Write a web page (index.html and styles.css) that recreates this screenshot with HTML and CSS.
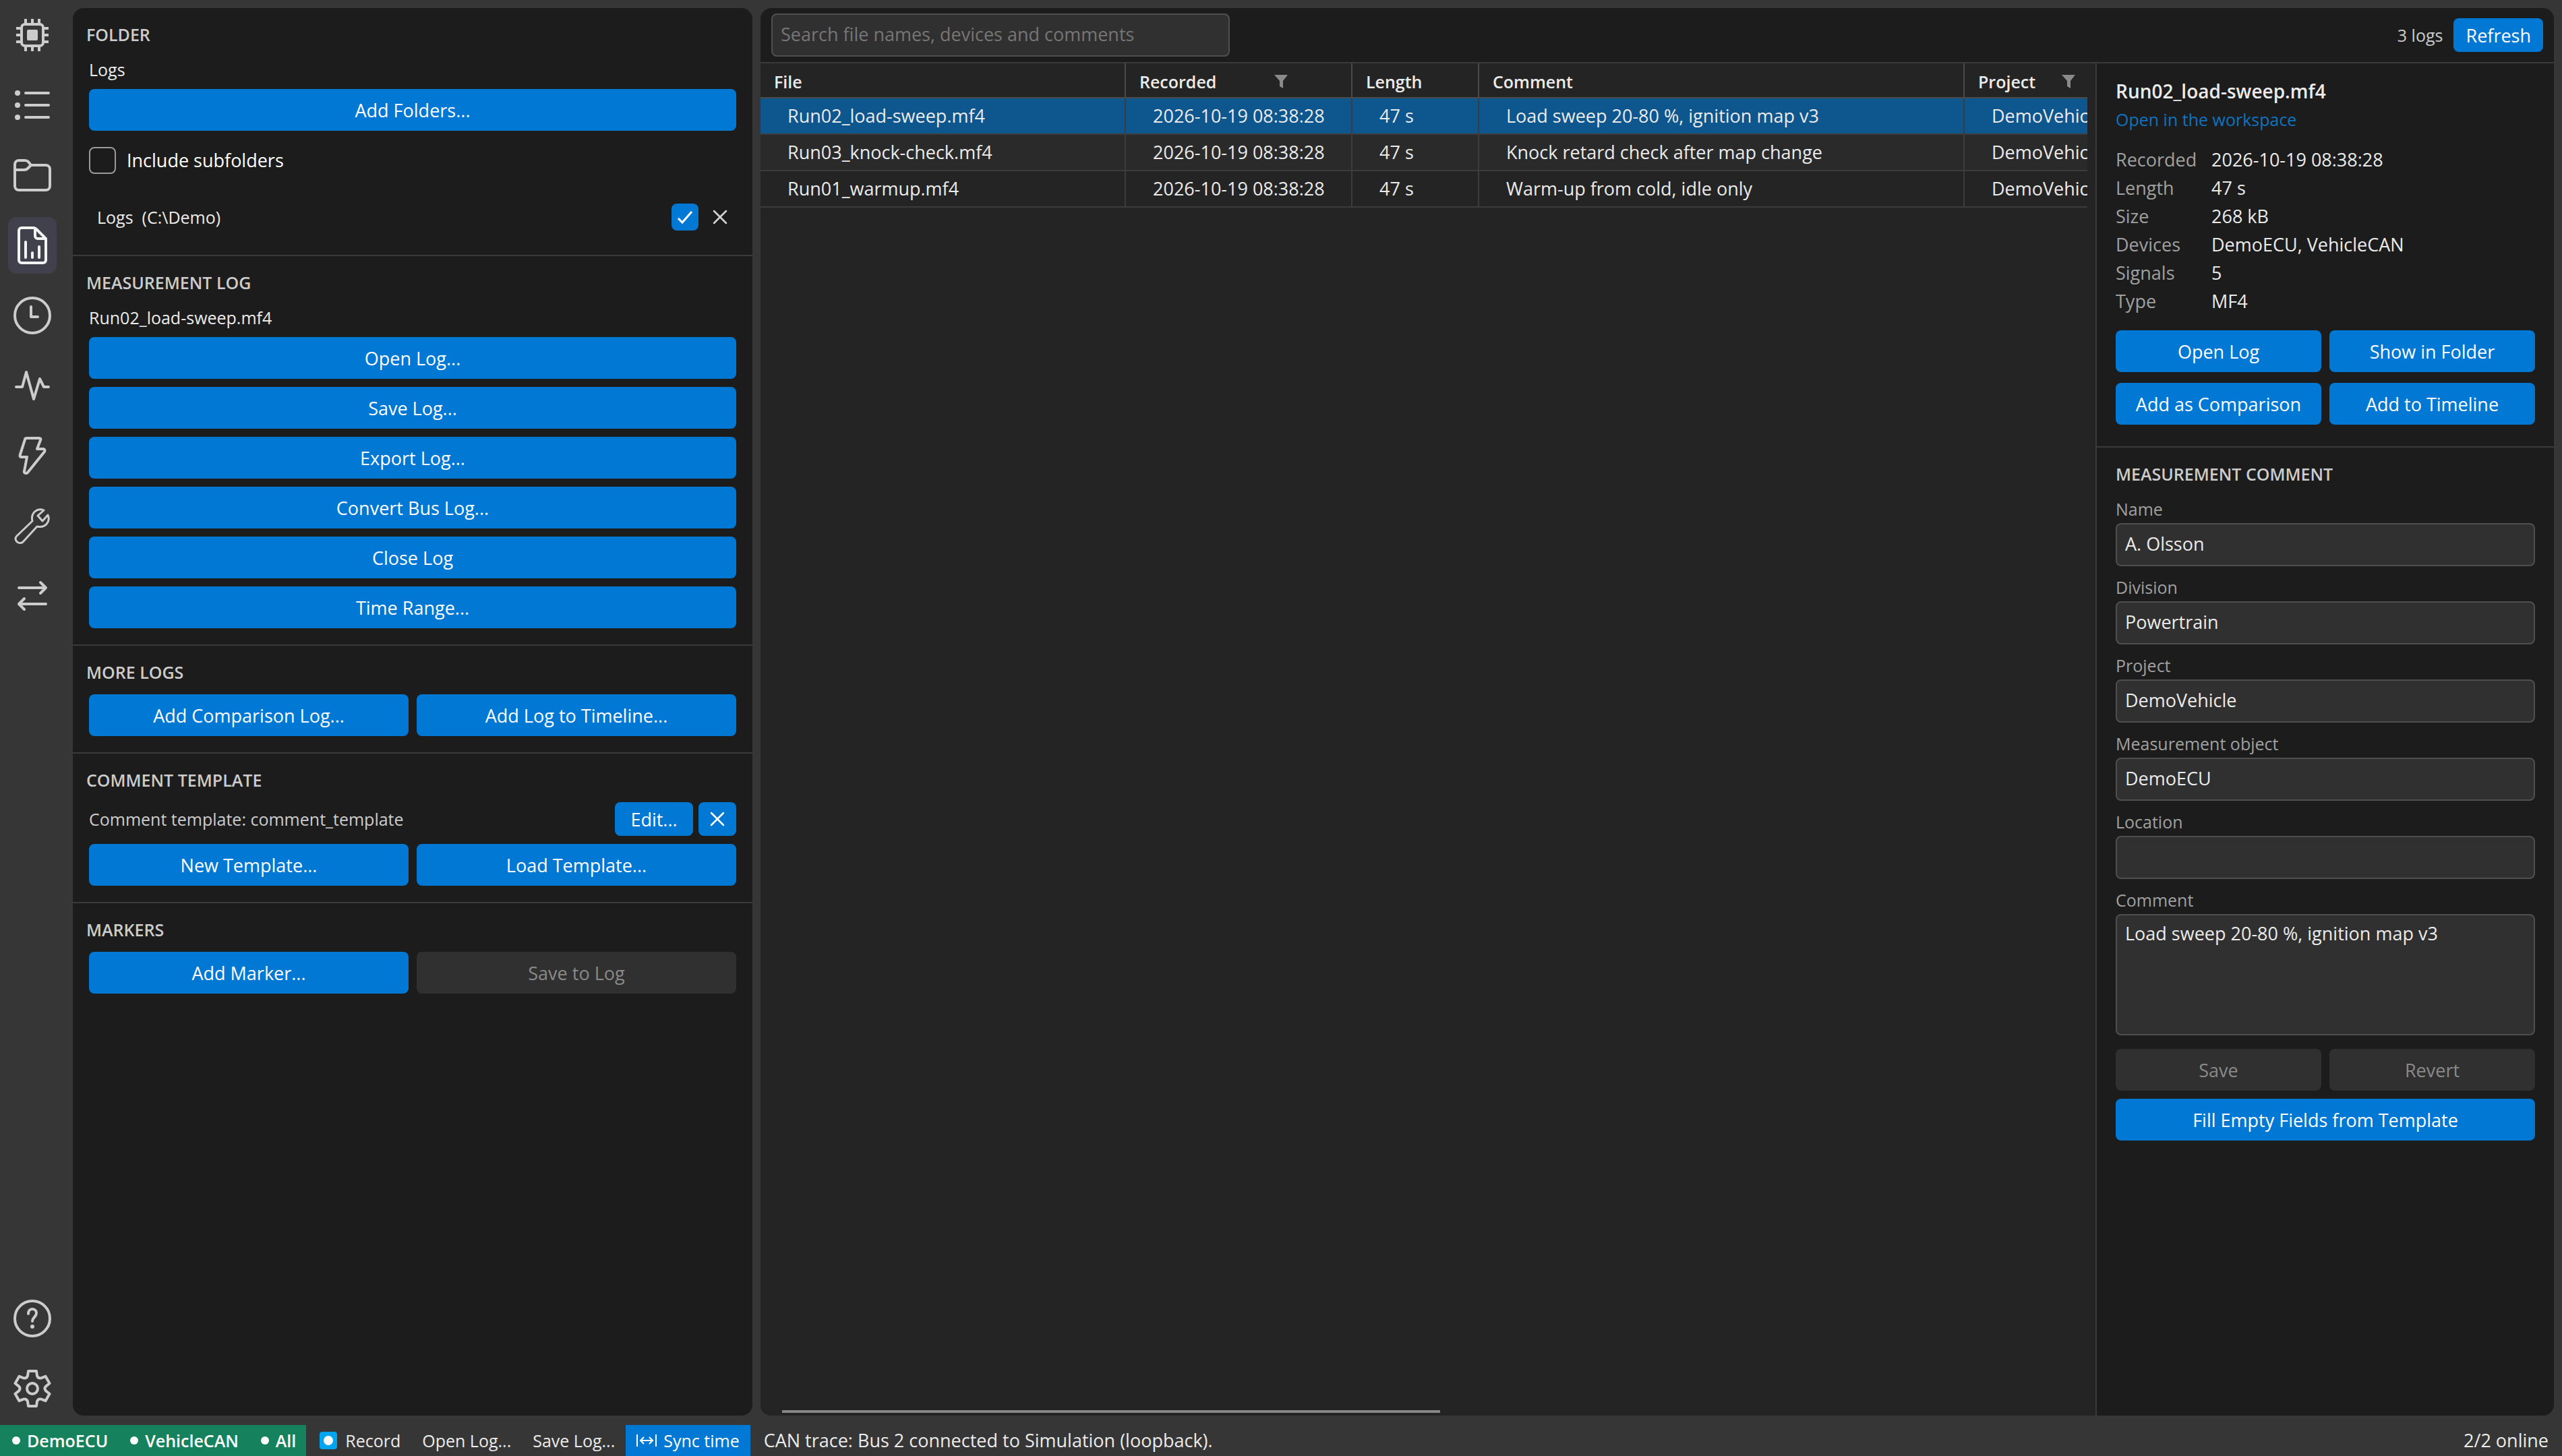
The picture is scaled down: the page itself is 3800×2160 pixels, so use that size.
FILE: index.html
```html
<!DOCTYPE html>
<html lang="en">
<head>
<meta charset="utf-8">
<title>Measurement logs</title>
<link rel="stylesheet" href="styles.css">
</head>
<body>
<div class="app">
  <nav class="rail" aria-label="Views">
    <button class="rail-btn" aria-label="Devices"><svg class="icon" viewBox="0 0 56 56"><rect x="12" y="12" width="32" height="32" rx="5"/><path d="M18 4v8M28 4v8M38 4v8M18 44v8M28 44v8M38 44v8M4 18h8M4 28h8M4 38h8M44 18h8M44 28h8M44 38h8" stroke-linecap="butt"/><rect class="solid" x="20" y="20" width="16" height="16" rx="2"/></svg></button>
    <button class="rail-btn" aria-label="Signals"><svg class="icon" viewBox="0 0 56 56"><path d="M18 10h34M18 28h34M18 46h34"/><circle class="solid" cx="6" cy="10" r="4"/><circle class="solid" cx="6" cy="28" r="4"/><circle class="solid" cx="6" cy="46" r="4"/></svg></button>
    <button class="rail-btn" aria-label="Files"><svg class="icon" viewBox="0 0 56 56"><path d="M2 12a6 6 0 0 1 6-6h9c2 0 4 1 5 2l4 5h22a6 6 0 0 1 6 6v25a6 6 0 0 1-6 6H8a6 6 0 0 1-6-6z"/><path d="M2 20h14c2 0 4-1 5-2l5-5"/></svg></button>
    <button class="rail-btn rail-btn-active" aria-label="Measurement logs" aria-current="page"><svg class="icon" viewBox="0 0 56 56"><path d="M12 2h18c1 0 3 1 4 2l12 12c1 1 2 2 2 4v30a4 4 0 0 1-4 4H12a4 4 0 0 1-4-4V6a4 4 0 0 1 4-4z"/><path d="M32 3v11a4 4 0 0 0 4 4h12M18 23v23M28 39v7M38 30v16"/></svg></button>
    <button class="rail-btn" aria-label="History"><svg class="icon" viewBox="0 0 56 56"><circle cx="28" cy="28" r="26"/><path d="M26 15v15h10"/></svg></button>
    <button class="rail-btn" aria-label="Live view"><svg class="icon" viewBox="0 0 56 56"><path d="M4 30h9L19 8l11 40 9-30 6 12h7"/></svg></button>
    <button class="rail-btn" aria-label="Triggers"><svg class="icon" viewBox="0 0 56 56"><path d="M20 2h18c2 0 3 1 2 3l-5 13h9c2 0 3 2 2 4L21 53c-2 2-6 1-5-2l4-21h-8c-2 0-3-1-2-4l7-22c0-1 1-2 3-2z"/></svg></button>
    <button class="rail-btn" aria-label="Tools"><svg class="icon icon-thin" viewBox="0 0 56 56"><path d="M45 5c-9-4-20 3-17 16L5 43c-6 6 3 14 9 9l21-23c13 3 20-8 16-17l-8 9-7-8z"/></svg></button>
    <button class="rail-btn" aria-label="Transfer"><svg class="icon" viewBox="0 0 56 56"><path d="M8 16h40M40 8l8 8-8 8M48 40H8M16 32l-8 8 8 8"/></svg></button>
    <span class="rail-space"></span>
    <button class="rail-btn" aria-label="Help"><svg class="icon" viewBox="0 0 56 56"><circle cx="28" cy="28" r="26"/><path d="M22 21c0-4 2-7 6-7s6 3 6 6c0 6-6 6-6 12"/><circle class="solid" cx="28" cy="40" r="3"/></svg></button>
    <button class="rail-btn" aria-label="Settings"><svg class="icon" viewBox="0 0 56 56"><path d="M34 2L35 9Q36.500 13.300 41 12.400L47.500 9.800L53.500 20.200L48 24.600Q45 28 48 31.400L53.500 35.800L47.500 46.200L41 43.600Q36.500 42.700 35 47L34 54H22L21 47Q19.500 42.700 15 43.600L8.500 46.200L2.500 35.800L8 31.400Q11 28 8 24.600L2.500 20.200L8.500 9.800L15 12.400Q19.500 13.300 21 9L22 2Z"/><circle cx="28" cy="28" r="8"/></svg></button>
  </nav>

  <aside class="side">
    <section class="group group-folder">
      <h2 class="heading">FOLDER</h2>
      <p class="caption">Logs</p>
      <button class="btn">Add Folders...</button>
      <label class="check-row"><span class="check"><input type="checkbox" class="check-box"></span>Include subfolders</label>
      <div class="folder-row">
        <label class="folder-name" for="folder-on">Logs&nbsp; (C:\Demo)</label>
        <span class="check"><input type="checkbox" class="check-box" id="folder-on" checked><svg class="check-mark" viewBox="0 0 40 40"><path d="M10 22l6 6 14-16"/></svg></span>
        <button class="bare" aria-label="Remove folder"><svg class="cross" viewBox="0 0 24 24"><path d="M3 3l18 18M21 3L3 21"/></svg></button>
      </div>
    </section>
    <section class="group">
      <h2 class="heading">MEASUREMENT LOG</h2>
      <p class="caption">Run02_load-sweep.mf4</p>
      <div class="stack">
        <button class="btn">Open Log...</button>
        <button class="btn">Save Log...</button>
        <button class="btn">Export Log...</button>
        <button class="btn">Convert Bus Log...</button>
        <button class="btn">Close Log</button>
        <button class="btn">Time Range...</button>
      </div>
    </section>
    <section class="group">
      <h2 class="heading">MORE LOGS</h2>
      <div class="pair"><button class="btn">Add Comparison Log...</button><button class="btn">Add Log to Timeline...</button></div>
    </section>
    <section class="group">
      <h2 class="heading">COMMENT TEMPLATE</h2>
      <div class="template-row">
        <span class="template-name">Comment template: comment_template</span>
        <button class="btn btn-small">Edit...</button>
        <button class="btn btn-small btn-square" aria-label="Clear template"><svg class="cross" viewBox="0 0 24 24"><path d="M3 3l18 18M21 3L3 21"/></svg></button>
      </div>
      <div class="pair"><button class="btn">New Template...</button><button class="btn">Load Template...</button></div>
    </section>
    <section class="group">
      <h2 class="heading">MARKERS</h2>
      <div class="pair"><button class="btn">Add Marker...</button><button class="btn" disabled>Save to Log</button></div>
    </section>
  </aside>

  <main class="main">
    <header class="toolbar">
      <input class="field search" type="search" placeholder="Search file names, devices and comments" aria-label="Search logs">
      <span class="count">3 logs</span>
      <button class="btn btn-small">Refresh</button>
    </header>
    <div class="content">
      <div class="list">
        <div class="table-clip">
          <table class="logs">
            <colgroup><col class="col-file"><col class="col-recorded"><col class="col-length"><col class="col-comment"><col class="col-project"></colgroup>
            <thead>
              <tr>
                <th>File</th>
                <th><span class="th-in">Recorded<svg class="funnel" viewBox="0 0 20 20"><path d="M0 0h20l-7 9v11l-5-3V9z"/></svg></span></th>
                <th>Length</th>
                <th>Comment</th>
                <th><span class="th-in">Project<svg class="funnel" viewBox="0 0 20 20"><path d="M0 0h20l-7 9v11l-5-3V9z"/></svg></span></th>
              </tr>
            </thead>
            <tbody>
              <tr class="selected"><td>Run02_load-sweep.mf4</td><td>2026-10-19 08:38:28</td><td>47 s</td><td>Load sweep 20-80 %, ignition map v3</td><td>DemoVehicle</td></tr>
              <tr class="odd"><td>Run03_knock-check.mf4</td><td>2026-10-19 08:38:28</td><td>47 s</td><td>Knock retard check after map change</td><td>DemoVehicle</td></tr>
              <tr><td>Run01_warmup.mf4</td><td>2026-10-19 08:38:28</td><td>47 s</td><td>Warm-up from cold, idle only</td><td>DemoVehicle</td></tr>
            </tbody>
          </table>
        </div>
        <div class="scroll-track"><div class="scroll-thumb"></div></div>
      </div>
      <aside class="detail">
        <section class="info">
          <h1 class="title">Run02_load-sweep.mf4</h1>
          <a class="link" href="#workspace">Open in the workspace</a>
          <dl class="facts">
            <dt>Recorded</dt><dd>2026-10-19 08:38:28</dd>
            <dt>Length</dt><dd>47 s</dd>
            <dt>Size</dt><dd>268 kB</dd>
            <dt>Devices</dt><dd>DemoECU, VehicleCAN</dd>
            <dt>Signals</dt><dd>5</dd>
            <dt>Type</dt><dd>MF4</dd>
          </dl>
          <div class="pair pair-loose">
            <button class="btn">Open Log</button><button class="btn">Show in Folder</button>
            <button class="btn">Add as Comparison</button><button class="btn">Add to Timeline</button>
          </div>
        </section>
        <form class="comment">
          <h2 class="heading heading-flush">MEASUREMENT COMMENT</h2>
          <label class="label" for="f-name">Name</label><input class="field" id="f-name" value="A. Olsson">
          <label class="label" for="f-division">Division</label><input class="field" id="f-division" value="Powertrain">
          <label class="label" for="f-project">Project</label><input class="field" id="f-project" value="DemoVehicle">
          <label class="label" for="f-object">Measurement object</label><input class="field" id="f-object" value="DemoECU">
          <label class="label" for="f-location">Location</label><input class="field" id="f-location">
          <label class="label" for="f-comment">Comment</label><textarea class="field area" id="f-comment">Load sweep 20-80 %, ignition map v3</textarea>
          <div class="pair form-actions">
            <button type="button" class="btn" disabled>Save</button><button type="button" class="btn" disabled>Revert</button>
            <button type="button" class="btn btn-wide">Fill Empty Fields from Template</button>
          </div>
        </form>
      </aside>
    </div>
  </main>
</div>

<footer class="status">
  <div class="online">
    <button class="online-item"><span class="dot"></span>DemoECU</button>
    <button class="online-item"><span class="dot"></span>VehicleCAN</button>
    <button class="online-item"><span class="dot"></span>All</button>
  </div>
  <button class="status-btn status-record"><svg class="record" viewBox="0 0 26 26"><rect width="26" height="26" rx="4"/><circle cx="13" cy="13" r="7"/></svg>Record</button>
  <button class="status-btn">Open Log...</button>
  <button class="status-btn">Save Log...</button>
  <button class="status-btn status-sync"><svg class="sync" viewBox="0 0 30 20"><path d="M1 1v18M29 1v18M6 10h18M11 5l-5 5 5 5M19 5l5 5-5 5"/></svg>Sync time</button>
  <span class="message">CAN trace: Bus 2 connected to Simulation (loopback).</span>
  <span class="summary">2/2 online</span>
</footer>
</body>
</html>
```
FILE: styles.css
```css
* { box-sizing: border-box; }

body {
  margin: 0;
  min-height: 100vh;
  display: flex;
  flex-direction: column;
  background: #363636;
  color: #ebebeb;
  font: 27px/38px "Open Sans", "Noto Sans", sans-serif;
}

h1, h2, p, dl, dd { margin: 0; }
button, input, textarea { font: inherit; color: inherit; }
button { border: 0; padding: 0; background: none; }

.app {
  flex: 1;
  display: flex;
  gap: 12px;
  padding: 0 12px 14px 0;
}

/* navigation rail */
.rail {
  flex: none;
  width: 96px;
  padding: 10px 12px 0;
  display: flex;
  flex-direction: column;
  gap: 20px;
  margin-bottom: -2px;
}
.rail-btn {
  flex: none;
  height: 84px;
  display: grid;
  place-items: center;
  border-radius: 12px;
  color: #cccccc;
}
.rail-btn-active { background: #41414d; color: #f2f2f2; }
.rail-space { flex: 1; }
.icon {
  width: 56px;
  height: 56px;
  fill: none;
  stroke: currentColor;
  stroke-width: 4;
  stroke-linecap: round;
  stroke-linejoin: round;
}
.icon-thin { stroke-width: 3; }
.icon .solid { fill: currentColor; stroke: none; }

/* panels */
.side, .main {
  margin-top: 12px;
  border-radius: 16px;
  background: #1c1c1c;
  overflow: hidden;
}
.side { flex: none; width: 1008px; }
.main { flex: 1; min-width: 0; display: flex; flex-direction: column; }

.group { padding: 20px 24px 24px; }
.group + .group { border-top: 2px solid #3a3a3a; }
.group-folder { padding-bottom: 36px; }
.heading {
  margin: 0 -4px 14px;
  font-size: 25px;
  line-height: 38px;
  font-weight: 600;
  color: #cccccc;
}
.heading-flush { margin: 0 0 14px; }
.caption { margin-bottom: 10px; font-size: 25px; }

.btn {
  width: 100%;
  height: 62px;
  padding-top: 2px;
  border-radius: 8px;
  background: #0078d4;
  color: #ffffff;
}
.btn:disabled { background: #303030; color: #8a8a8a; }
.btn-small { flex: none; width: auto; min-width: 116px; height: 50px; padding: 2px 18px 0; }
.btn-square { min-width: 56px; padding: 0; display: grid; place-items: center; }
.btn-wide { grid-column: 1 / -1; }
.stack { display: grid; gap: 12px; }
.pair { display: grid; grid-template-columns: 1fr 1fr; gap: 12px; }
.pair-loose { row-gap: 16px; }

.check-row { display: flex; align-items: center; gap: 16px; margin-top: 24px; color: #ffffff; }
.check { display: grid; width: 40px; height: 40px; }
.check-box {
  grid-area: 1 / 1;
  appearance: none;
  width: 40px;
  height: 40px;
  margin: 0;
  border: 2px solid #9a9a9a;
  border-radius: 8px;
}
.check-box:checked { background: #0078d4; border-color: #0078d4; }
.check-mark { grid-area: 1 / 1; fill: none; stroke: #ffffff; stroke-width: 3; pointer-events: none; }
.folder-row { display: flex; align-items: center; gap: 20px; margin-top: 44px; padding: 0 12px; }
.folder-name { flex: 1; font-size: 25px; }
.bare { display: grid; color: #d6d6d6; }
.cross { width: 24px; height: 24px; fill: none; stroke: currentColor; stroke-width: 2.5; stroke-linecap: round; }

.template-row { display: flex; align-items: center; gap: 8px; margin-bottom: 12px; }
.template-name { flex: 1; font-size: 25px; color: #cccccc; }

/* toolbar */
.toolbar {
  display: flex;
  align-items: center;
  gap: 16px;
  padding: 8px 16px;
  border-bottom: 2px solid #3a3a3a;
}
.field {
  display: block;
  width: 100%;
  height: 64px;
  padding: 0 12px 4px;
  border: 2px solid #4f4f4f;
  border-radius: 8px;
  background: #303030;
  outline: 0;
}
.search { width: 680px; margin-right: auto; }
.search::placeholder { color: #767676; opacity: 1; }
.count { font-size: 25px; color: #cccccc; }

.content { flex: 1; display: flex; }

/* log list */
.list {
  flex: 1;
  min-width: 0;
  display: flex;
  flex-direction: column;
  justify-content: space-between;
  padding: 0 12px 4px 0;
  background: #242424;
}
.table-clip { overflow: hidden; }
.logs { width: 2046px; table-layout: fixed; border-collapse: separate; border-spacing: 0; }
.col-file { width: 542px; }
.col-recorded { width: 336px; }
.col-length { width: 188px; }
.col-comment { width: 720px; }
.col-project { width: 260px; }
.logs th, .logs td {
  padding: 0;
  border-right: 2px solid #3c3c3c;
  border-bottom: 2px solid #3c3c3c;
  text-align: left;
  white-space: nowrap;
}
.logs th {
  height: 52px;
  padding: 4px 0 0 20px;
  font-size: 25px;
  font-weight: 600;
  border-color: #4a4a4a;
}
.logs td { height: 54px; padding-left: 40px; }
.th-in { display: flex; align-items: center; justify-content: space-between; padding-right: 94px; }
.funnel { width: 20px; height: 20px; fill: #8a8a8a; }
.selected { background: #0e568e; }
.odd { background: #2a2a2a; }
.scroll-track { padding-left: 32px; }
.scroll-thumb { width: 976px; max-width: 100%; height: 4px; background: #868686; }

/* log details */
.detail {
  flex: none;
  width: 680px;
  border-left: 2px solid #3a3a3a;
}
.info { padding: 20px 28px 32px; border-bottom: 2px solid #3a3a3a; }
.title { font-size: 28px; line-height: 42px; font-weight: 600; }
.link { display: block; line-height: 42px; font-size: 25px; color: #0f73c0; text-decoration: none; }
.facts {
  display: grid;
  grid-template-columns: 142px 1fr;
  margin: 18px 0 22px;
  line-height: 42px;
}
.facts dt { color: #a0a0a0; }
.comment { padding: 20px 28px 24px; }
.label { display: block; padding: 12px 0 2px; font-size: 25px; color: #a0a0a0; }
.heading-flush + .label { padding-top: 0; }
.area { height: 180px; padding-top: 8px; resize: none; overflow: hidden; }
.form-actions { margin-top: 20px; }

/* status bar */
.status { display: flex; align-items: center; height: 46px; }
.online { display: flex; height: 100%; background: #16825d; }
.online-item {
  display: flex;
  align-items: center;
  gap: 10px;
  padding: 0 15px 0 18px;
  font-size: 25px;
  font-weight: 600;
  color: #ffffff;
}
.dot { width: 12px; height: 12px; border-radius: 50%; background: #ffffff; }
.status-btn { display: flex; align-items: center; height: 100%; padding: 0 16px; font-size: 25px; }
.status-record { gap: 12px; padding-left: 20px; }
.record { width: 26px; height: 26px; fill: #00a4ef; }
.record circle { fill: #ffffff; }
.status-sync { gap: 10px; background: #0078d4; color: #ffffff; }
.sync { width: 30px; height: 20px; fill: none; stroke: currentColor; stroke-width: 2; }
.message { margin-left: 20px; }
.summary { margin-left: auto; padding-right: 20px; }
```
